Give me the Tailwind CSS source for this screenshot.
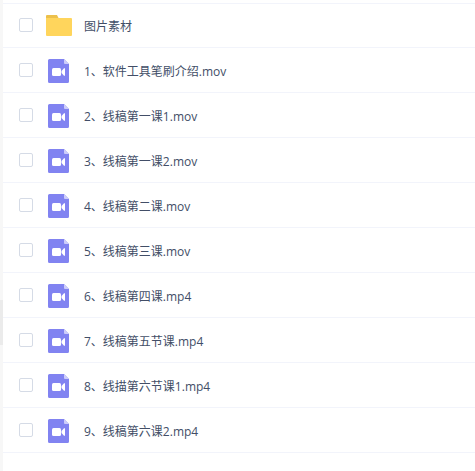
<!DOCTYPE html>
<html lang="zh-CN">
<head>
  <meta charset="UTF-8">
  <meta name="viewport" content="width=device-width, initial-scale=1.0">
  <title>文件列表</title>
  <script src="https://cdn.jsdelivr.net/npm/@tailwindcss/browser@4"></script>
</head>
<body class="flex h-[471px] overflow-hidden bg-white font-['Open_Sans','Noto_Sans_CJK_SC',sans-serif] text-[12px] text-[#424e67]">
  <!-- 视频文件图标 -->
  <svg class="hidden">
    <symbol id="video" viewBox="0 0 21 24">
      <path fill="#8183f1" d="M1.5 0H16l5 5v17.5a1.5 1.5 0 0 1-1.5 1.5h-18A1.5 1.5 0 0 1 0 22.500v-21A1.500 1.500 0 0 1 1.500 0z"/>
      <path fill="#cdcdfa" d="M16 0l5 5h-4a1 1 0 0 1-1-1z"/>
      <rect x="4" y="9" width="9" height="8" rx="1.5" fill="#fff"/>
      <path fill="#fff" d="M13.500 12L16 9.300h1v7.400h-1L13.500 14z"/>
    </symbol>
  </svg>

  <!-- 左侧滚动条 -->
  <div class="w-[3px] shrink-0 bg-[#f7f7f7] pt-[300px]">
    <div class="h-[45px] bg-[#ebebeb]"></div>
  </div>

  <!-- 文件列表 -->
  <ul class="flex-1 pt-[3px]">
    <li class="flex h-[45px] items-center border-y border-[#f2f4fb] pl-4">
      <span class="mb-px size-3.5 shrink-0 rounded-xs border border-[#d5dbe6]"></span>
      <svg class="ml-[13px] h-[21px] w-[26px]" viewBox="0 0 26 21">
        <path fill="#ecc04c" d="M1 0h10l1.500 3v3H0V1a1 1 0 0 1 1-1z"/>
        <path fill="#ffd55c" d="M0 3h25a1 1 0 0 1 1 1v16a1 1 0 0 1-1 1H1a1 1 0 0 1-1-1z"/>
      </svg>
      <span class="ml-3 pt-[3px]">图片素材</span>
    </li>
    <li class="flex h-[45px] items-center border-b border-[#f2f4fb] pl-4">
      <span class="size-3.5 shrink-0 rounded-xs border border-[#d5dbe6]"></span>
      <svg class="mt-0.5 ml-[15px] h-6 w-[21px]"><use href="#video"/></svg>
      <span class="ml-[15px] pt-[3px]">1、软件工具笔刷介绍.mov</span>
    </li>
    <li class="flex h-[45px] items-center border-b border-[#f2f4fb] pl-4">
      <span class="size-3.5 shrink-0 rounded-xs border border-[#d5dbe6]"></span>
      <svg class="mt-0.5 ml-[15px] h-6 w-[21px]"><use href="#video"/></svg>
      <span class="ml-[15px] pt-[3px]">2、线稿第一课1.mov</span>
    </li>
    <li class="flex h-[45px] items-center border-b border-[#f2f4fb] pl-4">
      <span class="size-3.5 shrink-0 rounded-xs border border-[#d5dbe6]"></span>
      <svg class="mt-0.5 ml-[15px] h-6 w-[21px]"><use href="#video"/></svg>
      <span class="ml-[15px] pt-[3px]">3、线稿第一课2.mov</span>
    </li>
    <li class="flex h-[45px] items-center border-b border-[#f2f4fb] pl-4">
      <span class="size-3.5 shrink-0 rounded-xs border border-[#d5dbe6]"></span>
      <svg class="mt-0.5 ml-[15px] h-6 w-[21px]"><use href="#video"/></svg>
      <span class="ml-[15px] pt-[3px]">4、线稿第二课.mov</span>
    </li>
    <li class="flex h-[45px] items-center border-b border-[#f2f4fb] pl-4">
      <span class="size-3.5 shrink-0 rounded-xs border border-[#d5dbe6]"></span>
      <svg class="mt-0.5 ml-[15px] h-6 w-[21px]"><use href="#video"/></svg>
      <span class="ml-[15px] pt-[3px]">5、线稿第三课.mov</span>
    </li>
    <li class="flex h-[45px] items-center border-b border-[#f2f4fb] pl-4">
      <span class="size-3.5 shrink-0 rounded-xs border border-[#d5dbe6]"></span>
      <svg class="mt-0.5 ml-[15px] h-6 w-[21px]"><use href="#video"/></svg>
      <span class="ml-[15px] pt-[3px]">6、线稿第四课.mp4</span>
    </li>
    <li class="flex h-[45px] items-center border-b border-[#f2f4fb] pl-4">
      <span class="size-3.5 shrink-0 rounded-xs border border-[#d5dbe6]"></span>
      <svg class="mt-0.5 ml-[15px] h-6 w-[21px]"><use href="#video"/></svg>
      <span class="ml-[15px] pt-[3px]">7、线稿第五节课.mp4</span>
    </li>
    <li class="flex h-[45px] items-center border-b border-[#f2f4fb] pl-4">
      <span class="size-3.5 shrink-0 rounded-xs border border-[#d5dbe6]"></span>
      <svg class="mt-0.5 ml-[15px] h-6 w-[21px]"><use href="#video"/></svg>
      <span class="ml-[15px] pt-[3px]">8、线描第六节课1.mp4</span>
    </li>
    <li class="flex h-[45px] items-center border-b border-[#f2f4fb] pl-4">
      <span class="size-3.5 shrink-0 rounded-xs border border-[#d5dbe6]"></span>
      <svg class="mt-0.5 ml-[15px] h-6 w-[21px]"><use href="#video"/></svg>
      <span class="ml-[15px] pt-[3px]">9、线稿第六课2.mp4</span>
    </li>
  </ul>
</body>
</html>
